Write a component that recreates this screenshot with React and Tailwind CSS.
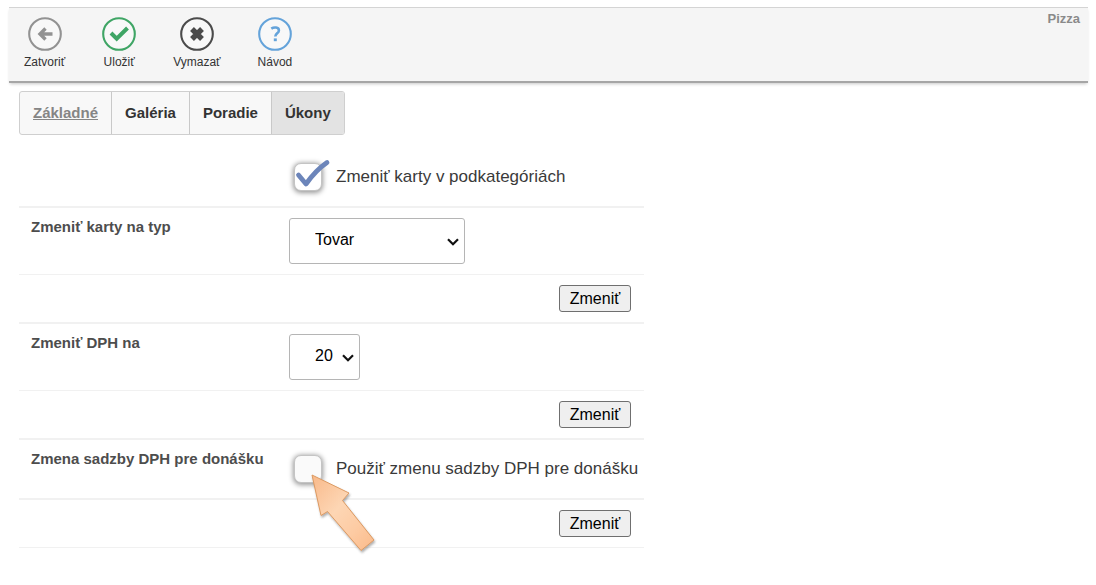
import React, { useState } from 'react';
import clsx from 'clsx';

const tools = [
  {
    label: 'Zatvoriť',
    color: 'text-[#929292]',
    icon: <path d="M24.5 17H13M17.5 11.5L12 17l5.5 5.5" fill="none" stroke="currentColor" strokeWidth="3.4" />,
  },
  {
    label: 'Uložiť',
    color: 'text-[#3fa565]',
    icon: <path d="M9 16l5.700 5.700L25.500 11" fill="none" stroke="currentColor" strokeWidth="4" />,
  },
  {
    label: 'Vymazať',
    color: 'text-[#4b4b4b]',
    icon: <path d="M12 12l10 10M22 12L12 22" fill="none" stroke="currentColor" strokeWidth="5.4" />,
  },
  {
    label: 'Návod',
    color: 'text-[#64a3da]',
    icon: (
      <g fill="none" stroke="currentColor" strokeWidth="2.6">
        <path d="M13.3 11.6c2.6-1.7 7.6-1.7 7.6 1.8 0 2.9-3.6 2.9-3.6 6.1" />
        <path d="M17.3 21.4v2.8" strokeWidth="3" />
      </g>
    ),
  },
];

const tabs = ['Základné', 'Galéria', 'Poradie', 'Úkony'];

function ToolButton({ label, color, icon }) {
  return (
    <button type="button" className="flex flex-col items-center gap-[3px]">
      <svg viewBox="0 0 34 34" className={clsx('size-[34px]', color)} aria-hidden="true">
        <circle cx="17" cy="17" r="15.8" fill="#f8f8f8" stroke="currentColor" strokeWidth="2.1" />
        {icon}
      </svg>
      <span className="text-xs text-[#333]">{label}</span>
    </button>
  );
}

function Row({ label, htmlFor, thick, children }) {
  return (
    <div className={clsx('flex py-2.5 pl-3 border-[#f1f1f1]', thick ? 'border-b-2' : 'border-b')}>
      <div className="w-[258px] shrink-0">
        {label && (
          <label htmlFor={htmlFor} className="block text-[15px] leading-[18px] font-bold text-[#4d4d4d]">
            {label}
          </label>
        )}
      </div>
      {children}
    </div>
  );
}

function ButtonRow({ thick }) {
  return (
    <div className={clsx('flex justify-end py-2.5 pr-[13px] border-[#f1f1f1]', thick ? 'border-b-2' : 'border-b')}>
      <button
        type="button"
        className="h-[27px] w-[72px] rounded-[3px] border border-[#6f6f6f] bg-[#efefef] text-base leading-6 text-black"
      >
        Zmeniť
      </button>
    </div>
  );
}

function Select({ id, value, onChange, options, className }) {
  return (
    <div className={clsx('relative', className)}>
      <select
        id={id}
        value={value}
        onChange={(e) => onChange(e.target.value)}
        className="h-[46px] w-full appearance-none rounded-[3px] border border-[#b5b5b5] bg-white pb-0.5 pl-[25px] text-base text-black"
      >
        {options.map((option) => (
          <option key={option}>{option}</option>
        ))}
      </select>
      <svg
        viewBox="0 0 12 8"
        className="pointer-events-none absolute top-5 right-1.5 h-2 w-3"
        aria-hidden="true"
      >
        <path d="M1 1.200L6 6.200L11 1.200" fill="none" stroke="#111" strokeWidth="2.2" />
      </svg>
    </div>
  );
}

function Checkbox({ id, label, checked, onChange, children }) {
  return (
    <div className="flex h-[38px] items-center gap-3.5 pl-[5px]">
      <div className="relative size-7">
        <input
          id={id}
          type="checkbox"
          checked={checked}
          onChange={(e) => onChange(e.target.checked)}
          className="block size-7 appearance-none rounded-[7px] border border-[#c4c4c4] bg-[#fafafa] shadow-[0_1px_5px_1px_#999] checked:bg-white"
        />
        {checked && (
          <svg
            viewBox="0 0 28 28"
            className="pointer-events-none absolute inset-0 size-7 overflow-visible"
            aria-hidden="true"
          >
            <path
              d="M4.500 12L12 21C18 12.500 25 5 33 -0.500"
              fill="none"
              stroke="#6c85ba"
              strokeWidth="4.800"
              strokeLinecap="round"
              strokeLinejoin="round"
            />
          </svg>
        )}
        {children}
      </div>
      <label htmlFor={id} className="text-[17px] leading-6 text-[#3a3a3a]">
        {label}
      </label>
    </div>
  );
}

function PointerArrow() {
  return (
    <svg
      viewBox="0 0 70 84"
      className="pointer-events-none absolute top-[19px] left-[17px] z-10 h-[84px] w-[70px] max-w-none overflow-visible"
      aria-hidden="true"
    >
      <defs>
        <linearGradient id="arrowFill" x1="0" y1="0" x2="0.9" y2="1">
          <stop offset="0" stopColor="#f9b98a" />
          <stop offset="0.45" stopColor="#fdd6b4" />
          <stop offset="0.75" stopColor="#fdcba3" />
          <stop offset="1" stopColor="#fbbd8e" />
        </linearGradient>
        <filter id="arrowShadow" filterUnits="userSpaceOnUse" x="-10" y="-10" width="95" height="105">
          <feDropShadow dx="1" dy="2" stdDeviation="1.3" floodColor="#555" floodOpacity="0.45" />
        </filter>
      </defs>
      <path
        d="M1 1L38 19L31.500 26.500L63 66L50 76.500L16.500 37.500L10 41.500Z"
        fill="url(#arrowFill)"
        stroke="#dc9a62"
        strokeWidth="1"
        strokeLinejoin="round"
        filter="url(#arrowShadow)"
      />
    </svg>
  );
}

export default function App() {
  const [subcategories, setSubcategories] = useState(true);
  const [delivery, setDelivery] = useState(false);
  const [type, setType] = useState('Tovar');
  const [vat, setVat] = useState('20');

  return (
    <div className="min-h-screen bg-white pt-[7px] pr-2 pl-[9px] font-['Liberation_Sans',Arial,sans-serif]">
      <header className="flex items-start justify-between border-t border-b-2 border-t-[#d4d4d4] border-b-[#a6a6a6] bg-[#f5f5f5] pt-[9px] pr-2 pb-[11px] pl-[15px] shadow-[0_2px_3px_-1px_#c8c8c8]">
        <div className="flex gap-[37px]">
          {tools.map((tool) => (
            <ToolButton key={tool.label} {...tool} />
          ))}
        </div>
        <span className="-mt-1.5 text-[13px] leading-4 font-bold text-[#8a8a8a]">Pizza</span>
      </header>

      <main className="px-2.5 pt-2">
        <nav className="flex w-fit overflow-hidden rounded-[3px] border border-[#cfcfcf] bg-[#f8f8f8]">
          {tabs.map((tab, i) => (
            <a
              key={tab}
              href="#"
              className={clsx(
                'px-[13px] text-[15px] leading-[42px] font-bold',
                i === 0 ? 'text-[#858585] underline' : 'border-l border-[#c9c9c9] text-[#333]',
                tab === 'Úkony' && 'bg-[#e3e3e3]'
              )}
            >
              {tab}
            </a>
          ))}
        </nav>

        <form className="mt-[13px] max-w-[625px]">
          <Row thick>
            <Checkbox
              id="subcategories"
              label="Zmeniť karty v podkategóriách"
              checked={subcategories}
              onChange={setSubcategories}
            />
          </Row>

          <Row label="Zmeniť karty na typ" htmlFor="type">
            <Select id="type" value={type} onChange={setType} options={['Tovar']} className="w-44" />
          </Row>
          <ButtonRow thick />

          <Row label="Zmeniť DPH na" htmlFor="vat">
            <Select id="vat" value={vat} onChange={setVat} options={['20']} className="w-[71px]" />
          </Row>
          <ButtonRow thick />

          <Row label="Zmena sadzby DPH pre donášku" htmlFor="delivery" thick>
            <Checkbox
              id="delivery"
              label="Použiť zmenu sadzby DPH pre donášku"
              checked={delivery}
              onChange={setDelivery}
            >
              <PointerArrow />
            </Checkbox>
          </Row>
          <ButtonRow />
        </form>
      </main>
    </div>
  );
}
